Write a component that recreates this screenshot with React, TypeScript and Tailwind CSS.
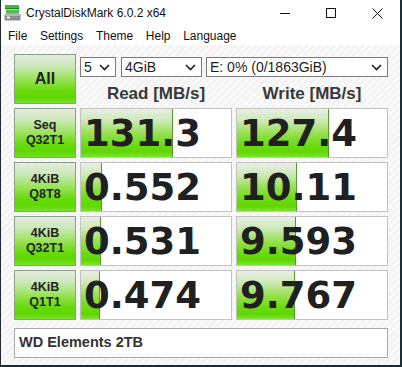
import React from 'react';

const rows = [
  { top: 'Seq', bottom: 'Q32T1', read: '131.3', readW: 92, write: '127.4', writeW: 92 },
  { top: '4KiB', bottom: 'Q8T8', read: '0.552', readW: 21, write: '10.11', writeW: 60 },
  { top: '4KiB', bottom: 'Q32T1', read: '0.531', readW: 20, write: '9.593', writeW: 59 },
  { top: '4KiB', bottom: 'Q1T1', read: '0.474', readW: 19, write: '9.767', writeW: 58 },
];

const menu = ['File', 'Settings', 'Theme', 'Help', 'Language'];

function Chevron() {
  return (
    <svg width="11" height="7" viewBox="0 0 11 7" className="shrink-0">
      <polyline points="1,1 5.5,5.5 10,1" fill="none" stroke="#1e1e1e" strokeWidth="1.6" />
    </svg>
  );
}

function Select({ value, className }: { value: string; className: string }) {
  return (
    <div className={`h-[20px] bg-white border border-[#7a7a7a] flex items-center justify-between pl-[3px] pr-[5px] font-['Liberation_Sans',sans-serif] text-[14px] text-[#1e1e1e] ${className}`}>
      <span className="leading-none">{value}</span>
      <Chevron />
    </div>
  );
}

function TestButton({ children }: { children: React.ReactNode }) {
  return (
    <div className="h-[50px] border border-[#8ba088] bg-[linear-gradient(to_bottom,#e4ebe1_0%,#cde9bb_22%,#9be25a_50%,#66da0a_75%,#5ed800_88%,#79de2c_100%)] flex flex-col items-center justify-center font-['Liberation_Sans',sans-serif] font-bold text-[#222] text-center">
      {children}
    </div>
  );
}

function ValueBox({ value, width }: { value: string; width: number }) {
  return (
    <div className="relative h-[50px] border border-[#c2c2c2] bg-white overflow-hidden flex items-center">
      <div
        className="absolute left-0 top-0 bottom-0 border-r border-r-[#4f9b2c] bg-[linear-gradient(to_bottom,#e9eee6_0%,#cbe9b4_25%,#98e052_50%,#6bdb12_75%,#5fd800_90%,#80e03a_100%)]"
        style={{ width }}
      />
      <span className="relative pl-[3px] font-['DejaVu_Sans',sans-serif] font-bold text-[37px] leading-none text-[#202020]">
        {value}
      </span>
    </div>
  );
}

export default function App() {
  return (
    <div className="w-[402px] h-[367px] bg-[#1b2a33] flex">
      <div className="ml-[1px] w-[399px] h-[365px] bg-white flex flex-col">
        {/* title bar */}
        <div className="h-[26px] flex items-center font-['Liberation_Sans',sans-serif] text-[12px] text-[#111]">
          <svg width="17" height="16" viewBox="0 0 17 16" className="ml-[3px] mr-[5px]">
            <rect x="1" y="0" width="14" height="3" fill="#3cb83c" />
            <rect x="1" y="3" width="14" height="1" fill="#1e7a1e" />
            <rect x="2" y="4.5" width="13" height="3" fill="#48c848" />
            <rect x="2" y="7.5" width="13" height="1" fill="#1e7a1e" />
            <rect x="0.5" y="9" width="16" height="6.5" rx="1" fill="#8d8d8d" />
            <rect x="0.5" y="9" width="16" height="2" fill="#b5b5b5" />
            <rect x="3" y="11.5" width="3" height="2" fill="#e8f8e0" />
          </svg>
          <span className="leading-none">CrystalDiskMark 6.0.2 x64</span>
          <div className="ml-auto flex items-center h-full">
            <div className="w-[46px] h-full flex items-center justify-center">
              <div className="w-[10px] h-[1px] bg-[#111]" />
            </div>
            <div className="w-[46px] h-full flex items-center justify-center">
              <div className="w-[10px] h-[10px] border border-[#111]" />
            </div>
            <div className="w-[46px] h-full flex items-center justify-center">
              <svg width="11" height="11" viewBox="0 0 11 11">
                <path d="M0.5 0.5 L10.5 10.5 M10.5 0.5 L0.5 10.5" stroke="#111" strokeWidth="1" />
              </svg>
            </div>
          </div>
        </div>

        {/* menu bar */}
        <div className="h-[19px] flex items-center pl-[7px] gap-[12.6px] font-['Liberation_Sans',sans-serif] text-[12px] text-[#111]">
          {menu.map((m) => (
            <span key={m} className="leading-none">{m}</span>
          ))}
        </div>

        {/* main panel */}
        <div className="flex-1 bg-[repeating-linear-gradient(135deg,#f3f3f3_0px,#f3f3f3_3px,#fafafa_3px,#fafafa_5px)] pt-[9px] pl-[13px]">
          <div className="w-[374px] flex flex-col gap-[4px]">
            <div className="flex gap-[4px]">
              <div className="w-[62px]">
                <TestButton>
                  <span className="text-[16px] leading-none">All</span>
                </TestButton>
              </div>
              <div className="w-[308px] flex flex-col">
                <div className="mt-[3px] flex">
                  <Select value="5" className="w-[36px]" />
                  <Select value="4GiB" className="w-[81px] ml-[5px]" />
                  <Select value="E: 0% (0/1863GiB)" className="w-[182px] ml-[4px]" />
                </div>
                <div className="mt-[8px] grid grid-cols-2 gap-[4px] font-['Liberation_Sans',sans-serif] font-bold text-[17px] leading-[17px] text-[#383838] text-center">
                  <span>Read [MB/s]</span>
                  <span>Write [MB/s]</span>
                </div>
              </div>
            </div>

            {rows.map((r, i) => (
              <div key={i} className="grid grid-cols-[62px_152px_152px] gap-[4px]">
                <TestButton>
                  <span className="text-[12.5px] leading-[15px]">{r.top}</span>
                  <span className="text-[12.5px] leading-[15px]">{r.bottom}</span>
                </TestButton>
                <ValueBox value={r.read} width={r.readW} />
                <ValueBox value={r.write} width={r.writeW} />
              </div>
            ))}

            <div className="mt-[4px] h-[30px] w-[374px] border border-[#a9a9a9] bg-white flex items-center pl-[4px] font-['Liberation_Sans',sans-serif] font-bold text-[14.5px] text-[#333]">
              WD Elements 2TB
            </div>
          </div>
        </div>
      </div>
    </div>
  );
}
